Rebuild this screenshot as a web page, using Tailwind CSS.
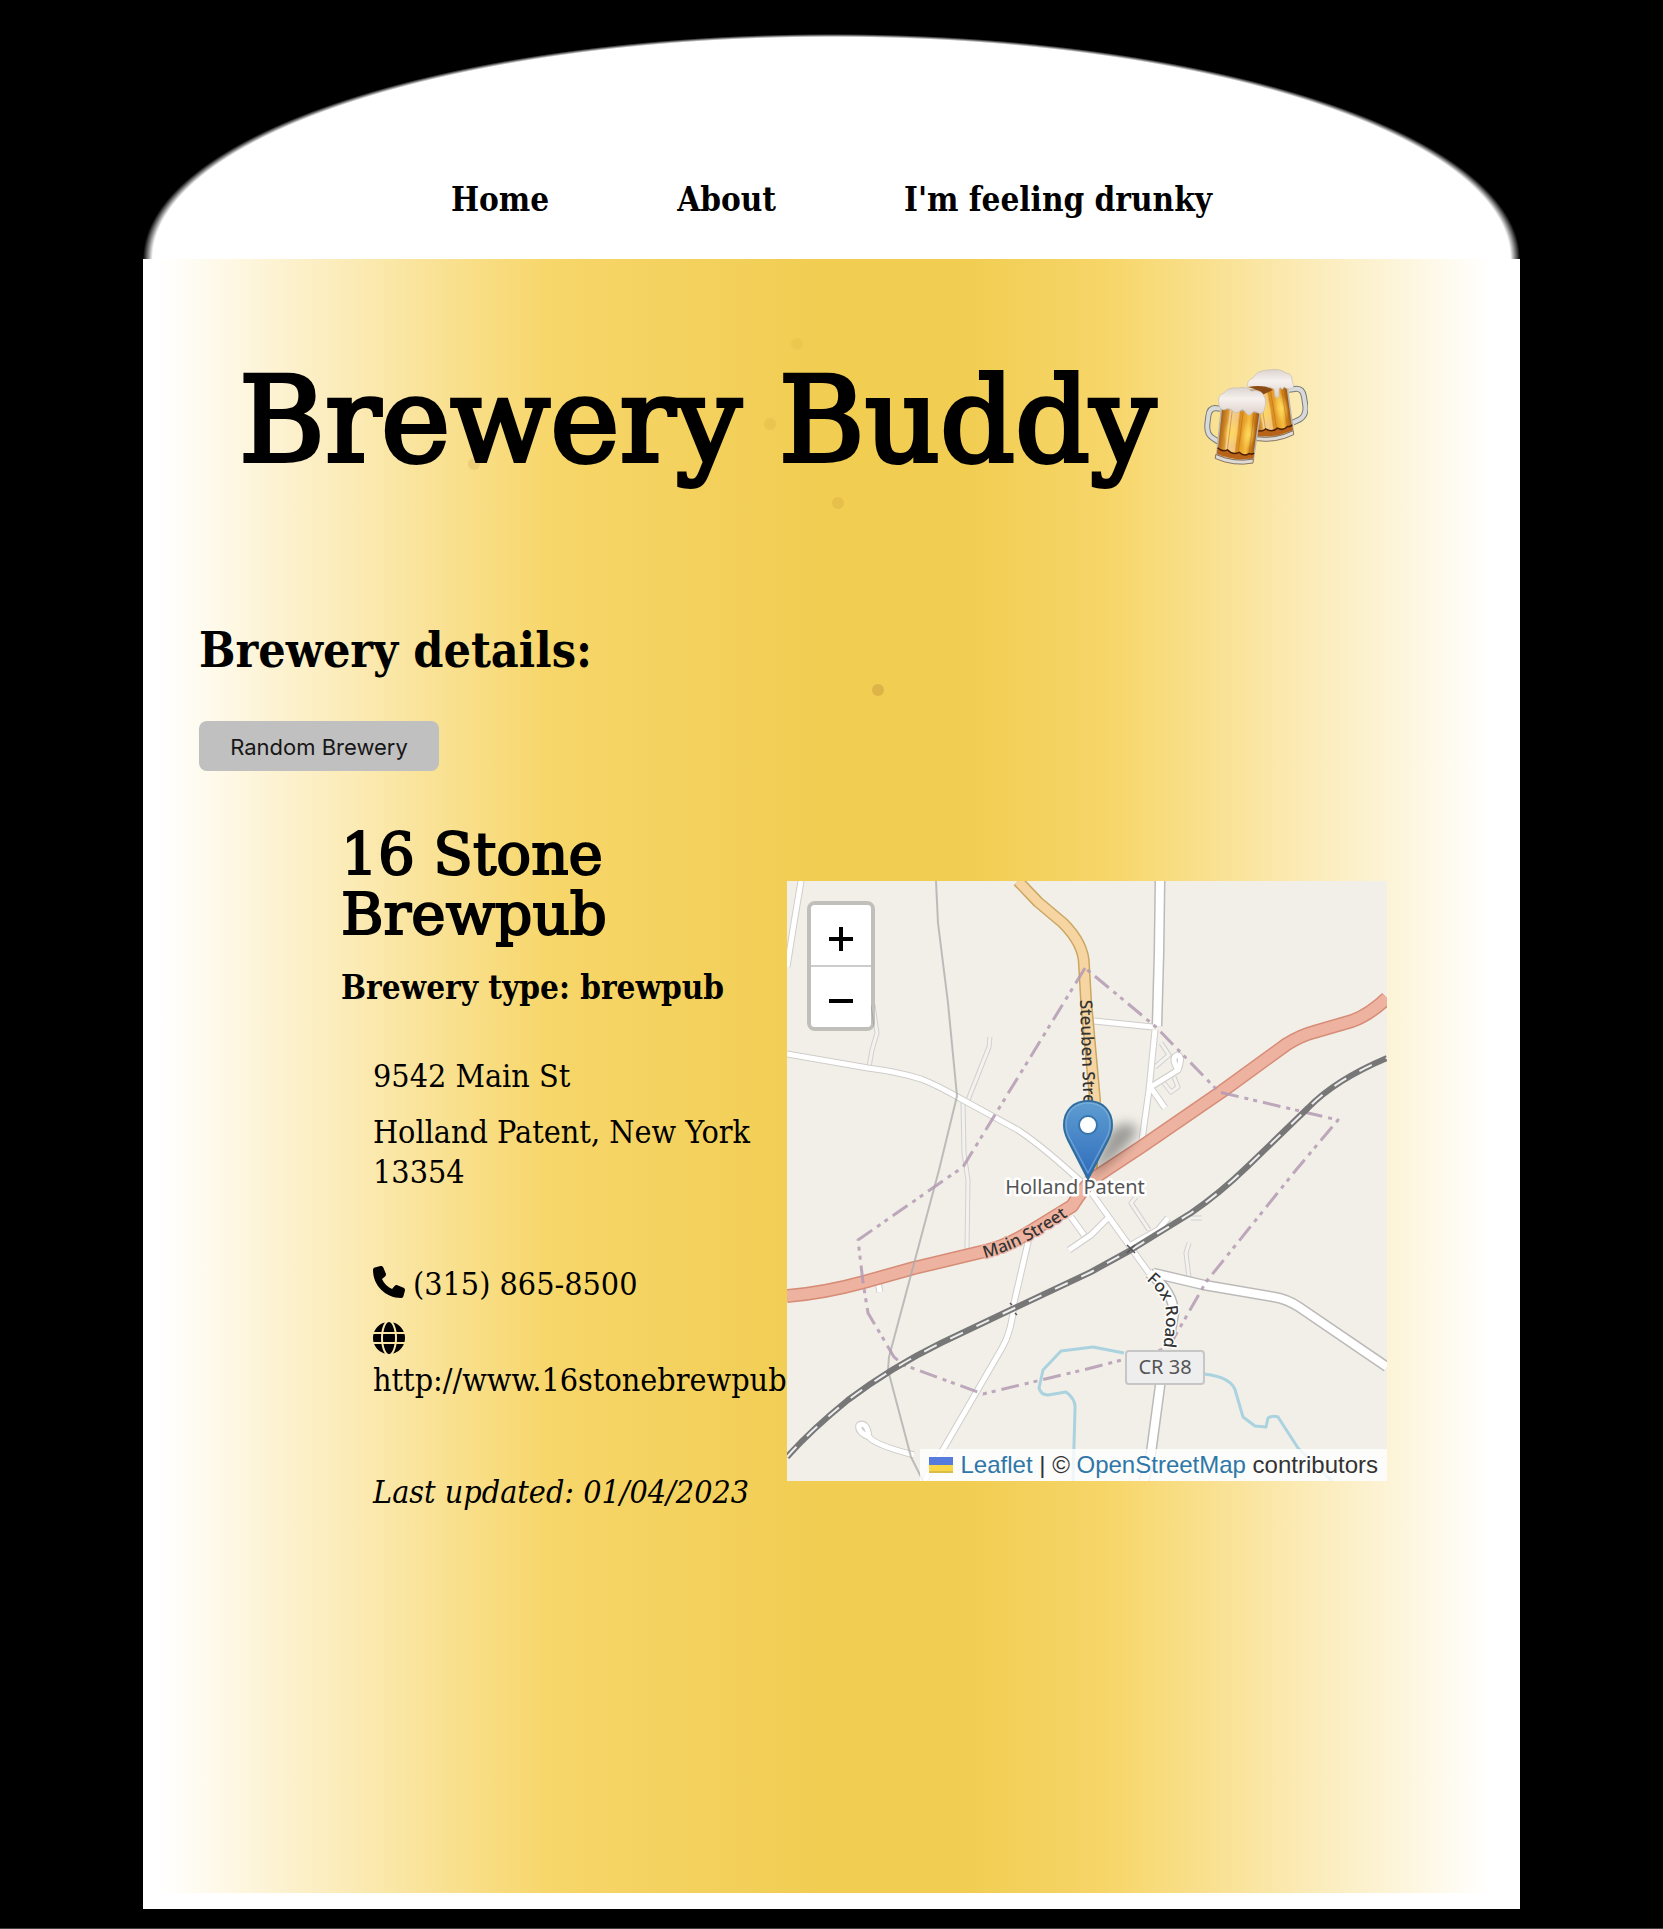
<!DOCTYPE html>
<html lang="en">
<head>
<meta charset="utf-8">
<meta name="viewport" content="width=device-width, initial-scale=1">
<title>Brewery Buddy</title>
<script src="https://cdn.jsdelivr.net/npm/@tailwindcss/browser@4"></script>
</head>
<body class="bg-black">
<div class="min-h-screen border-b border-neutral-700 pt-[34px] pb-[19px] font-['DejaVu_Serif_Condensed','DejaVu_Serif',serif] text-black">
  <div class="mx-auto flex w-full max-w-[1377px] flex-col">

    <!-- Foam: the dome of the glass -->
    <header class="flex h-[225px] items-end justify-center bg-[radial-gradient(50%_100%_at_50%_100%,#fff_98.6%,#000_100%)] pb-[39px]">
      <nav class="flex gap-32 text-[33px] leading-10 font-bold">
        <a href="#home">Home</a>
        <a href="#about">About</a>
        <a href="#random">I'm feeling drunky</a>
      </nav>
    </header>

    <!-- Beer -->
    <main class="relative min-h-[1650px] border-x-16 border-b-16 border-white bg-[linear-gradient(to_right,#fff_0%,#f7d66a_29%,#f1cd52_49%,#f1cd52_60%,#f7d66a_71%,#fff_99%)] px-10 pt-[102px]">
      <div aria-hidden="true">
        <span class="absolute top-[79px] left-[47%] size-3 rounded-full bg-[#c08a30]/10"></span>
        <span class="absolute top-[159px] left-[45%] size-3 rounded-full bg-[#c08a30]/15"></span>
        <span class="absolute top-[199px] left-[23%] size-3 rounded-full bg-[#c08a30]/20"></span>
        <span class="absolute top-[238px] left-[50%] size-3 rounded-full bg-[#c08a30]/20"></span>
        <span class="absolute top-[425px] left-[53%] size-3 rounded-full bg-[#b07a30]/30"></span>
      </div>

      <h1 class="relative flex items-start gap-12 pl-10 font-['DejaVu_Serif',serif] text-[117px] leading-[120px] whitespace-nowrap [-webkit-text-stroke:4px_black]">
        Brewery Buddy
        <svg class="mt-2 w-[104px] shrink-0" viewBox="0 0 104 98" role="img" aria-label="Clinking beer mugs">
          <defs>
            <linearGradient id="beer" x1="0" x2="1">
              <stop offset="0" stop-color="#a4590f"/><stop offset=".2" stop-color="#dc9a35"/><stop offset=".24" stop-color="#f3cf94"/><stop offset=".46" stop-color="#f2c57a"/><stop offset=".5" stop-color="#d98a1e"/><stop offset=".75" stop-color="#f6bd3f"/><stop offset=".88" stop-color="#c97a18"/><stop offset="1" stop-color="#8f4a0c"/>
            </linearGradient>
            <linearGradient id="foam" x1="0" y1="0" x2="0" y2="1">
              <stop offset="0" stop-color="#dcd4d0"/><stop offset=".4" stop-color="#f6f1ee"/><stop offset="1" stop-color="#ddd0cb"/>
            </linearGradient>
            <radialGradient id="glow"><stop offset="0" stop-color="#ffd95c"/><stop offset="1" stop-color="#ffd95c" stop-opacity="0"/></radialGradient>
            <g id="mug">
              <path d="M3 15 L42 15 L41 62 Q22 68 4 62Z" fill="url(#beer)" stroke="#b9b4ad" stroke-width="1.5"/>
              <ellipse cx="16" cy="38" rx="8" ry="15" fill="url(#glow)"/><ellipse cx="33" cy="38" rx="7" ry="15" fill="url(#glow)"/>
              <path d="M14 16V58M25 16V59M36 16V58" stroke="#a86315" stroke-opacity=".45"/>
              <path d="M4 55q5 4 10 1q6 5 12 1q5 4 10 0q3 1 5 -1v5q-19 6-37 0z" fill="#b8631a"/>
              <path d="M4 55q5 4 10 1q6 5 12 1q5 4 10 0q3 1 5 -1" fill="none" stroke="#4e2106" stroke-width="1.5"/>
              <path d="M3 62q19 6 38 0v4q-19 6-38 0z" fill="#dedbd6" stroke="#75604e" stroke-width=".8"/>
            </g>
          </defs>
          <g transform="translate(44 3) rotate(-9 22 34)">
            <use href="#mug"/>
            <path d="M43 21h6q8 0 8 9v8q0 11-8 14l-7 2" fill="none" stroke="#77797a" stroke-width="6"/>
            <path d="M43 21h6q8 0 8 9v8q0 11-8 14l-7 2" fill="none" stroke="#d8dad9" stroke-width="4"/>
          </g>
          <path d="M43 18Q43 11 49 9Q53 1 65 1Q76-1 82 4Q89 5 88 12Q92 19 86 20Q82 20 80 18Q78 22 77 19Q76 18 75 20V27Q73 31 71 27L70 20Q62 16 55 19Q47 20 43 18Z" fill="url(#foam)" stroke="#c9beb8" stroke-width=".7"/>
          <path d="M44 18q16-3 25 3l-11 5q-4-6-14-8z" fill="#8c4b14"/>
          <g transform="translate(12 26) rotate(7 22 34)">
            <path d="M2 16h-4q-7 0-7 9v7q0 11 7 14l6 3" fill="none" stroke="#77797a" stroke-width="6"/>
            <path d="M2 16h-4q-7 0-7 9v7q0 11 7 14l6 3" fill="none" stroke="#d8dad9" stroke-width="4"/>
            <use href="#mug"/>
          </g>
          <path d="M15 35Q13 26 20 24Q24 18 34 19Q43 17 47 22Q57 20 60 27Q63 32 60 42Q57 47 53 43Q49 41 47 45Q45 48 42 44Q39 38 36 42Q31 46 28 41Q24 38 20 41Q15 40 15 35Z" fill="url(#foam)" stroke="#c9beb8" stroke-width=".7"/>
        </svg>
      </h1>

      <h2 class="relative mt-[141px] text-[48px] leading-14 font-bold">Brewery details:</h2>
      <button type="button" class="relative mt-[43px] block h-[50px] w-[240px] rounded-lg bg-[#c0c0c0] pt-0.5 font-['Inter',sans-serif] text-[22px] text-neutral-900">Random Brewery</button>

      <section class="relative mt-[53px] flex items-start pl-[142px]">
        <div class="w-[446px] shrink-0">
          <h3 class="font-['DejaVu_Serif',serif] text-[58px] leading-[60px] [-webkit-text-stroke:2px_black]">16 Stone Brewpub</h3>
          <p class="mt-6 text-[33px] leading-10 font-bold whitespace-nowrap">Brewery type: brewpub</p>
          <div class="pl-8 text-[32px] leading-10">
            <p class="mt-12">9542 Main St</p>
            <p class="mt-4">Holland Patent, New York 13354</p>
            <p class="mt-18 flex items-start gap-2">
              <svg class="mt-0.5 size-8 shrink-0" viewBox="0 0 512 512" aria-hidden="true"><path d="M164.900 24.600c-7.700-18.600-28-28.500-47.400-23.200l-88 24C12.100 30.200 0 46 0 64c0 247.400 200.600 448 448 448 18 0 33.800-12.100 38.600-29.500l24-88c5.300-19.400-4.600-39.700-23.200-47.400l-96-40c-16.300-6.800-35.200-2.100-46.300 11.600L304.700 368C234.300 334.700 177.300 277.700 144 207.300L193.300 167c13.700-11.200 18.400-30 11.600-46.300l-40-96z"/></svg>
              <a href="tel:+13158658500">(315) 865-8500</a>
            </p>
            <p class="mt-4 pt-0.5">
              <svg class="mb-1.5 block size-8" viewBox="0 0 512 512" aria-hidden="true"><path d="M352 256c0 22.200-1.200 43.600-3.300 64H163.300c-2.200-20.400-3.300-41.800-3.300-64s1.200-43.600 3.300-64h185.400c2.200 20.400 3.300 41.800 3.300 64zm28.800-64h123.100c5.300 20.500 8.100 41.900 8.100 64s-2.800 43.500-8.100 64H380.800c2.100-20.600 3.200-42 3.200-64s-1.100-43.400-3.200-64zm112.600-32H376.700c-10-63.900-29.800-117.400-55.300-151.600 78.300 20.700 142 77.500 171.900 151.600zm-149.100 0H167.700c6.100-36.400 15.500-68.600 27-94.700 10.500-23.600 22.200-40.700 33.500-51.500C239.400 3.200 248.700 0 256 0s16.600 3.200 27.800 13.800c11.300 10.800 23 27.900 33.500 51.500 11.600 26 20.900 58.200 27 94.700zm-209 0H18.600C48.600 85.900 112.200 29.100 190.600 8.400 165.100 42.600 145.300 96.100 135.300 160zM8.100 192h123.100c-2.100 20.600-3.200 42-3.200 64s1.100 43.400 3.200 64H8.100C2.800 299.500 0 278.100 0 256s2.800-43.500 8.100-64zm186.600 254.600c-11.600-26-20.900-58.200-27-94.600h176.600c-6.100 36.400-15.500 68.600-27 94.600-10.500 23.600-22.200 40.700-33.500 51.500-11.200 10.700-20.500 13.900-27.800 13.900s-16.600-3.200-27.800-13.800c-11.300-10.800-23-27.900-33.500-51.600zM135.300 352c10 63.900 29.800 117.400 55.300 151.600C112.200 482.900 48.600 426.100 18.600 352h116.700zm358.100 0c-30 74.100-93.600 130.900-171.900 151.600 25.500-34.200 45.200-87.700 55.300-151.600h116.600z"/></svg>
              <a href="http://www.16stonebrewpub.com" class="block whitespace-nowrap">http://www.16stonebrewpub.com</a>
            </p>
            <p class="mt-18 whitespace-nowrap italic">Last updated: 01/04/2023</p>
          </div>
        </div>

        <div class="relative mt-[57px] size-[600px] shrink-0 overflow-hidden bg-[#f2efe9]">
          <svg class="block size-full" viewBox="0 0 600 600" fill="none" stroke-linejoin="round" font-family="'Noto Sans', 'Open Sans', sans-serif" aria-label="Map of Holland Patent, New York">
            <defs>
              <linearGradient id="pin" x1="0" y1="0" x2="0" y2="1"><stop offset="0" stop-color="#5f9dd2"/><stop offset="1" stop-color="#2e6bbb"/></linearGradient>
              <filter id="soft" x="-50%" y="-50%" width="200%" height="200%"><feGaussianBlur stdDeviation="6"/></filter>
              <g id="minor">
                <path d="M14 0L7 42L0 86M0 173L81 187Q112 191 134 198Q150 204 176 219L231 249Q258 267 301 307L344 367L362 392M368 149L362 209L355 259M307 140L366 146M362 207L391 189Q396 176 391 174Q383 176 391 189M364 207L378 227M242 357L227 422Q225 450 215 467L154 572L137 600M82 556Q70 551 72 544Q80 540 82 556Q88 564 127 574M284 336L297 354M282 369L304 354L321 337M344 364L371 349L381 337M91 402L93 411"/>
              </g>
              <path id="major" d="M373 0L372 72L370 145M366 392L417 404L487 416Q500 418 512 426L600 486M362 392Q386 410 387 432L381 466M375 490L364 572L357 600"/>
              <path id="tracks" d="M82 186L85 169L90 152L86 124M181 219L202 166L203 156M176 221L177 272L181 299L180 368M374 162L382 174L368 186M377 202L384 211L391 206L387 196M362 349L344 322L349 316M402 397L399 372L402 362M404 337H415"/>
              <path id="red" d="M0 415Q37 412 77 401L127 387L194 371Q218 366 241 352L285 325Q297 306 307 297L354 266L434 211L500 163Q515 154 527 151L565 140Q582 134 600 117"/>
              <path id="orange" d="M231 0L251 21L276 42Q297 63 297 84L299 119L308 219L304 300"/>
              <path id="rail" d="M0 576Q24 549 61 519Q105 486 154 462L234 424L304 391L344 369L404 332Q432 313 461 285L521 227Q548 199 600 177"/>
              <path id="mainLabel" d="M198 377Q238 367 288 330"/>
              <path id="foxLabel" d="M359 399Q382 418 379 440L376 470"/>
            </defs>
            <g stroke="#aad3df" stroke-width="3"><path d="M337 472L306 466L274 470L256 489L252 507Q254 514 261 514L279 511Q289 518 288 528L286 600"/><path d="M417 493Q446 496 449 512L456 536L468 545L479 546L481 537Q486 534 491 536L511 567L545 600"/></g>
            <use href="#tracks" stroke="#d2d0cf" stroke-width="5"/><use href="#tracks" stroke="#f4f2ee" stroke-width="3"/>
            <use href="#minor" stroke="#cfcdca" stroke-width="7"/>
            <use href="#major" stroke="#bcbab8" stroke-width="11"/>
            <use href="#minor" stroke="#fff" stroke-width="5"/><use href="#major" stroke="#fff" stroke-width="8"/>
            <use href="#orange" stroke="#c9a760" stroke-width="12"/><use href="#orange" stroke="#f7d5a3" stroke-width="9"/>
            <use href="#red" stroke="#d68c76" stroke-width="14"/><use href="#red" stroke="#eeb3a0" stroke-width="11"/>
            <path d="M149 0L151 42L161 122L170 215L152 289L102 476L101 489L124 576L136 600" stroke="#aaa" stroke-opacity=".75" stroke-width="2"/>
            <path d="M298 87L176 286L71 359L76 401L81 432L107 476L117 484L196 513L304 487L381 467L399 436L419 401L509 289L551 239L432 211L369 146Z" stroke="#b39ab3" stroke-opacity=".85" stroke-width="3" stroke-dasharray="18 6 4 5 4 6"/>
            <use href="#rail" stroke="#777" stroke-width="6"/><use href="#rail" stroke="#eee" stroke-width="2" stroke-dasharray="14 15"/>
            <path d="M340 364l8 8M348 364l-8 8M223 422l2 2M228 432l2 2" stroke="#555" stroke-width="1.5"/>
            <g font-size="17" font-weight="500" fill="#333">
              <text transform="translate(293 119) rotate(88)">Steuben Street</text>
              <text stroke="#eeb3a0" stroke-width="3" paint-order="stroke"><textPath href="#mainLabel">Main Street</textPath></text>
              <text stroke="#fff" stroke-width="3" paint-order="stroke"><textPath href="#foxLabel">Fox Road</textPath></text>
            </g>
            <text x="288" y="313" text-anchor="middle" font-size="20" fill="#555" stroke="#fff" stroke-width="5" paint-order="stroke">Holland Patent</text>
            <rect x="339" y="470" width="78" height="33" rx="3" fill="#eee" stroke="#c6c6c6" stroke-width="2"/>
            <text x="378" y="493" text-anchor="middle" font-size="20" fill="#555">CR 38</text>
            <path d="M302 298L322 252Q338 236 350 247Q352 260 302 298" fill="#000" fill-opacity=".35" filter="url(#soft)"/>
            <path d="M301 298L281 259Q277 251 277 244C277 229 287 220 301 220S325 229 325 244Q325 251 321 259Z" fill="url(#pin)" stroke="#2f6d9f" stroke-width="2"/>
            <path d="M301 292L283 258Q279 251 279 244C279 230 288 222 301 222S323 230 323 244Q323 251 319 258Z" stroke="#8ab9df" stroke-opacity=".55" stroke-width="1.500"/>
            <circle cx="301" cy="244" r="9" fill="#fff" stroke="#3676ad" stroke-width="2"/>
          </svg>

          <div class="absolute top-5 left-5 flex w-[68px] flex-col rounded-lg border-4 border-black/20 bg-clip-padding">
            <button type="button" aria-label="Zoom in" class="flex h-[62px] items-center justify-center rounded-t border-b-2 border-[#ccc] bg-white pt-2"><svg class="size-6" viewBox="0 0 24 24" stroke="#000" stroke-width="4"><path d="M0 12H24M12 0V24"/></svg></button>
            <button type="button" aria-label="Zoom out" class="flex h-15 items-center justify-center rounded-b bg-white pt-2"><svg class="size-6" viewBox="0 0 24 24" stroke="#000" stroke-width="4"><path d="M0 12H24"/></svg></button>
          </div>

          <div class="absolute right-0 bottom-0 flex h-8 items-center bg-white/80 px-[9px] font-['Liberation_Sans',sans-serif] text-[24px] leading-8 whitespace-pre text-[#333]"><svg class="mr-2 h-4 w-6" viewBox="0 0 24 16" aria-hidden="true"><path fill="#557bdc" d="M0 0h24v8H0z"/><path fill="#f9d648" d="M0 8h24v8H0z"/><path fill="#dcbc48" d="M0 14h24v2H0z"/></svg><a href="https://leafletjs.com" class="text-[#2e77a8]">Leaflet</a> | © <a href="https://www.openstreetmap.org/copyright" class="text-[#2e77a8]">OpenStreetMap</a> contributors</div>
        </div>
      </section>
    </main>
  </div>
</div>
</body>
</html>
